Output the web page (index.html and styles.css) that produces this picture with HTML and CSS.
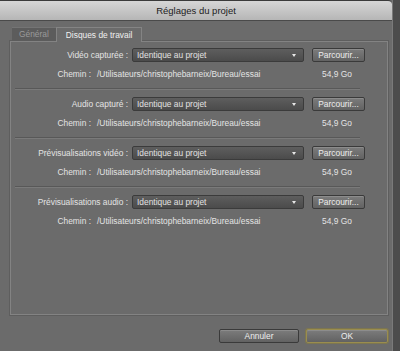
FILE: index.html
```html
<!DOCTYPE html>
<html lang="fr">
<head>
    <meta charset="UTF-8">
    <title>Réglages du projet</title>
    <link rel="stylesheet" href="styles.css">
</head>
<body>
    <div class="window">
        <div class="titlebar">Réglages du projet</div>
        <div class="content">
            <div class="tabs">
                <div class="tab">Général</div>
                <div class="tab active">Disques de travail</div>
            </div>
            <div class="panel">
                <div class="group">
                    <div class="row">
                        <span class="label">Vidéo capturée :</span>
                        <div class="select">Identique au projet<span class="arrow"></span></div>
                        <button class="btn">Parcourir...</button>
                    </div>
                    <div class="path-row">
                        <span class="path-label">Chemin :</span>
                        <span class="path">/Utilisateurs/christophebarneix/Bureau/essai</span>
                        <span class="size">54,9 Go</span>
                    </div>
                </div>
                <div class="divider"></div>
                <div class="group">
                    <div class="row">
                        <span class="label">Audio capturé :</span>
                        <div class="select">Identique au projet<span class="arrow"></span></div>
                        <button class="btn">Parcourir...</button>
                    </div>
                    <div class="path-row">
                        <span class="path-label">Chemin :</span>
                        <span class="path">/Utilisateurs/christophebarneix/Bureau/essai</span>
                        <span class="size">54,9 Go</span>
                    </div>
                </div>
                <div class="divider"></div>
                <div class="group">
                    <div class="row">
                        <span class="label">Prévisualisations vidéo :</span>
                        <div class="select">Identique au projet<span class="arrow"></span></div>
                        <button class="btn">Parcourir...</button>
                    </div>
                    <div class="path-row">
                        <span class="path-label">Chemin :</span>
                        <span class="path">/Utilisateurs/christophebarneix/Bureau/essai</span>
                        <span class="size">54,9 Go</span>
                    </div>
                </div>
                <div class="divider"></div>
                <div class="group">
                    <div class="row">
                        <span class="label">Prévisualisations audio :</span>
                        <div class="select">Identique au projet<span class="arrow"></span></div>
                        <button class="btn">Parcourir...</button>
                    </div>
                    <div class="path-row">
                        <span class="path-label">Chemin :</span>
                        <span class="path">/Utilisateurs/christophebarneix/Bureau/essai</span>
                        <span class="size">54,9 Go</span>
                    </div>
                </div>
            </div>
            <div class="footer">
                <button class="btn footer-btn">Annuler</button>
                <button class="btn footer-btn ok">OK</button>
            </div>
        </div>
    </div>
</body>
</html>
```

FILE: styles.css
```css
body {
    margin: 0;
    background-color: #4c4c4c;
    font-family: "Liberation Sans", Arial, sans-serif;
    font-size: 8.4px;
    color: #e4e4e4;
}

.window {
    width: 392px;
    height: 351px;
    background-color: #6b6b6b;
    border-right: 1px solid #7a7a7a;
    display: flex;
    flex-direction: column;
}

.titlebar {
    height: 19px;
    line-height: 19px;
    text-align: center;
    font-size: 9.5px;
    color: #1c1c1c;
    background: linear-gradient(#d6d6d6, #b6b6b6);
    border-top: 1px solid #3a3a3a;
    border-bottom: 1px solid #4a4a4a;
    border-top-right-radius: 4px;
}

.content {
    padding: 6px 4px 0 10px;
}

.tabs {
    display: flex;
    align-items: flex-end;
    height: 14px;
    padding-left: 2px;
}

.tab {
    height: 13px;
    line-height: 13px;
    padding: 0 7px;
    background-color: #5c5c5c;
    color: #9a9a9a;
    border-top: 1px solid #747474;
}

.tab.active {
    height: 14px;
    line-height: 14px;
    padding: 0 9px;
    background-color: #6b6b6b;
    color: #f0f0f0;
    border: 1px solid #848484;
    border-bottom: none;
    margin-bottom: -1px;
    position: relative;
}

.panel {
    height: 272px;
    border: 1px solid #838383;
    box-shadow: 0 0 0 1px #5e5e5e;
}

.group {
    padding: 6px 0 8px;
}

.group + .divider + .group {
    padding-top: 7px;
}

.row {
    display: flex;
    align-items: center;
    height: 14px;
}

.label {
    width: 117px;
    margin-right: 4px;
    text-align: right;
}

.select {
    width: 166px;
    height: 12px;
    line-height: 12px;
    padding-left: 4px;
    position: relative;
    color: #e2e2e2;
    background: linear-gradient(#5e5e5e, #4b4b4b);
    border: 1px solid #3b3b3b;
    border-radius: 2px;
    margin-right: 8px;
    box-sizing: content-box;
}

.arrow {
    position: absolute;
    right: 7px;
    top: 5px;
    width: 0;
    height: 0;
    border-left: 2.5px solid transparent;
    border-right: 2.5px solid transparent;
    border-top: 3px solid #e8e8e8;
}

.btn {
    font-family: inherit;
    font-size: 8.4px;
    color: #eeeeee;
    width: 53px;
    height: 14px;
    padding: 0;
    background: linear-gradient(#7c7c7c, #626262);
    border: 1px solid #3a3a3a;
    border-radius: 2px;
    box-shadow: inset 0 1px 0 #8c8c8c;
}

.path-row {
    display: flex;
    height: 12px;
    line-height: 12px;
    margin-top: 6px;
}

.path-label {
    width: 80px;
    text-align: right;
    margin-right: 6px;
}

.path {
    width: 225px;
}

.divider {
    height: 1px;
    margin: 0 27px 0 4px;
    background-color: #585858;
    border-bottom: 1px solid #7a7a7a;
}

.footer {
    display: flex;
    justify-content: flex-end;
    gap: 7px;
    padding: 14px 0 0;
}

.footer-btn {
    width: 80px;
    height: 14px;
}

.footer-btn.ok {
    width: 82px;
    border-color: #9a8d4e;
    box-shadow: 0 0 0 1px #7d7650, inset 0 1px 0 #8c8c8c;
}
```
